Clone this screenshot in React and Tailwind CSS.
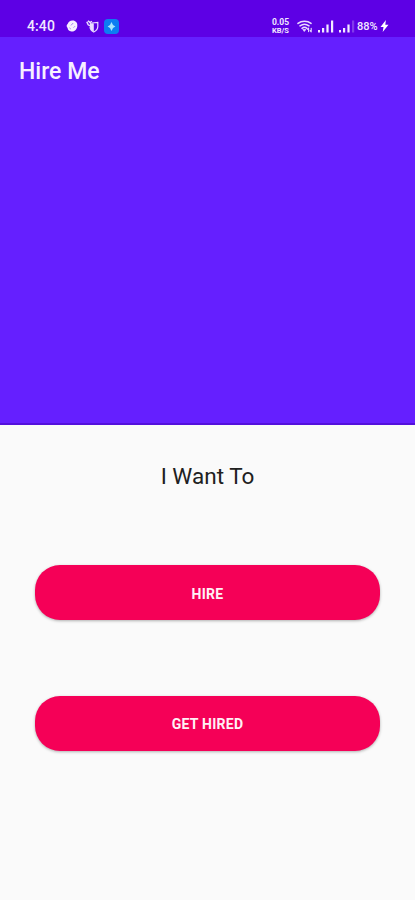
import { useState } from 'react';

const GlobeIcon = () => (
  <svg width="12" height="12" viewBox="0 0 12 12" className="ml-[11px]">
    <path d="M6.4.4C9.4.2 11.6 2.6 11.3 5.4 11.4 8.6 9 11.6 5.8 11.4 3 11.6 1.8 9.8 1.6 8 .2 6.6.4 4.8 1.8 3.8 2.4 1.8 4 .5 6.4.4Z" fill="#f6eeff" />
    <path d="M7.2 3 5 5.4M9 6.2 7.6 7.6M3.4 7.8 4.8 9" fill="none" stroke="#a77af4" strokeWidth="1" />
  </svg>
);

const ShieldIcon = () => (
  <svg width="13" height="13" viewBox="0 0 13 13" className="ml-2" fill="none" stroke="#eadcff">
    <path d="M6 3 11.8 2.4V6.6C11.8 9.2 10 11 7.8 12 5.6 11 4.2 9.4 4 7" strokeWidth="1.2" />
    <path d="M7.8 3.4V11.6C5.8 10.8 4.2 9.4 4 6.4V3Z" fill="#eadcff" stroke="none" />
    <path d="M.8 1.8 2.2 4.8 4.6 6M2 .8 4 2.6 6 1.4" strokeWidth="1.5" />
  </svg>
);

const SparkIcon = () => (
  <svg width="15" height="15" viewBox="0 0 15 15" className="ml-[5px]">
    <rect width="15" height="15" rx="4" fill="#0c7df2" />
    <path d="M7.5 3 9 6 11.4 7.5 9 9 7.5 12 6 9 3.6 7.5 6 6Z" fill="#a6e4ff" />
  </svg>
);

const WifiIcon = () => (
  <svg width="16" height="13" viewBox="0 0 16 13" className="ml-[7px]" fill="none" stroke="#eadcff" strokeWidth="1.5" strokeLinecap="round">
    <path d="M1 3.4C4.6.4 10.4.4 14 3.4M3 5.9C5.8 3.8 9.2 3.8 12 5.9M5 8.3C6.6 7 8.4 7 10 8.3" />
    <path d="M6.2 9.4H8.8L7.5 11.2Z" fill="#eadcff" strokeWidth=".8" />
    <path d="M11.6 11.6V8.4M10.6 9.4 11.6 8.2M14.2 8.2V11.6M13.2 10.6 14.2 11.8" strokeWidth="1.1" />
  </svg>
);

const SignalIcon = ({ weak, className }) => (
  <svg width="16" height="13" viewBox="0 0 16 13" className={className} fill="#f3eaff">
    <rect x="0" y="10" width="2" height="2.5" />
    <rect x="4" y="8" width="2.2" height="4.5" />
    <rect x="8.4" y="4.5" width="2.2" height="8" />
    <rect x="13" y="0.5" width="2.2" height="12" opacity={weak ? 0.25 : 1} />
  </svg>
);

const BoltIcon = () => (
  <svg width="9" height="12" viewBox="0 0 8 12" className="ml-[1px]">
    <path d="M5.4 0 0 7H3L2.2 12 8 4.8H4.8Z" fill="#fff" />
  </svg>
);

const StatusBar = () => (
  <div className="flex h-[37px] items-center bg-[#5d00e5] pt-[15px] pr-[26px] pl-[27px] text-[#f1e8ff]">
    <span className="w-7 text-[14px] leading-none font-medium tracking-[0.1px]">4:40</span>
    <GlobeIcon />
    <ShieldIcon />
    <SparkIcon />
    <div className="ml-auto flex items-center">
      <div className="flex w-[19px] flex-col items-center text-[8.5px] font-bold">
        <span className="h-[9px] leading-[9px]">0.05</span>
        <span className="h-[8px] text-[7.5px] leading-[8px]">KB/S</span>
      </div>
      <WifiIcon />
      <SignalIcon className="ml-[5px]" />
      <SignalIcon weak className="ml-[5px]" />
      <span className="ml-[2px] w-[22px] text-[11px] leading-none font-medium whitespace-nowrap">88%</span>
      <BoltIcon />
    </div>
  </div>
);

const choices = [
  { key: 'hire', label: 'HIRE' },
  { key: 'hired', label: 'GET HIRED' },
];

export default function App() {
  const [, setChoice] = useState(null);

  return (
    <div className="flex h-[900px] w-full flex-col overflow-hidden bg-[#fafafa] font-[Roboto,sans-serif]">
      <StatusBar />

      {/* App bar */}
      <header className="flex h-[67px] items-center bg-[#651fff] pt-[2px] pl-[19px]">
        <h1 className="text-[23px] leading-none font-medium text-[#f7f0ff]">Hire Me</h1>
      </header>

      {/* Banner */}
      <div className="h-[321px] border-b-2 border-[#5310dc] bg-[#651fff]" />

      <main className="flex flex-col px-[35px] pt-[37px]">
        <h2 className="h-[29px] text-center text-[22.5px] leading-[29px] text-[#202020]">I Want To</h2>
        <div className="mt-[74px] flex flex-col gap-[75.5px]">
          {choices.map(c => (
            <button key={c.key} type="button" onClick={() => setChoice(c.key)}
              className="h-[55px] rounded-[25px] bg-[#f50057] pt-[3px] text-[14px] font-bold tracking-[0.25px] text-[#fff0f5] shadow-[0_1px_3px_rgba(0,0,0,0.3)]">
              {c.label}
            </button>
          ))}
        </div>
      </main>
    </div>
  );
}
